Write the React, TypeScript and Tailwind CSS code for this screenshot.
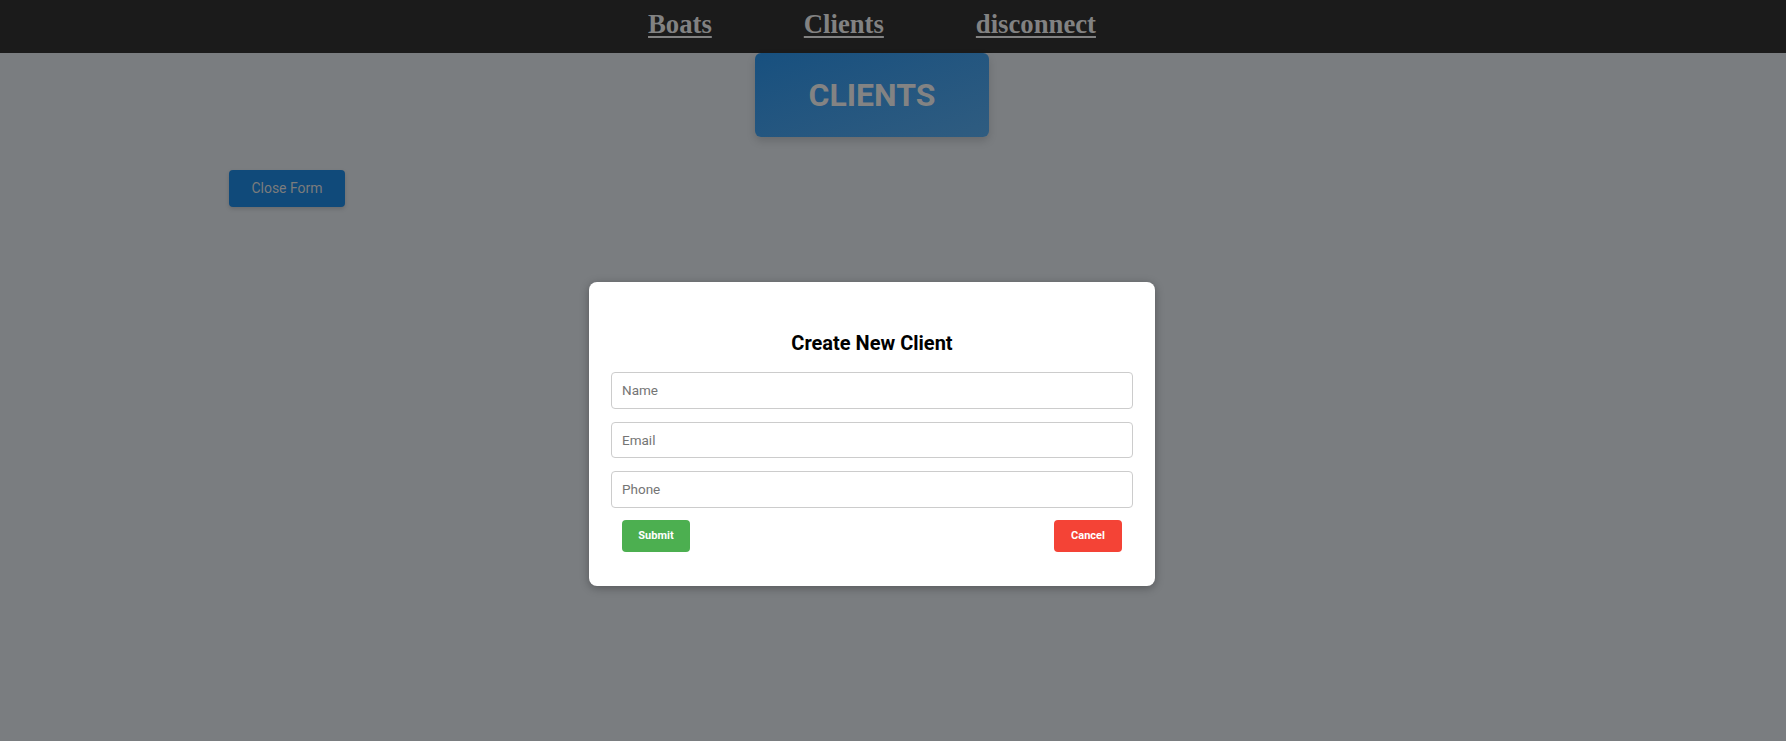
import { useState } from "react";

export default function App() {
  const [form, setForm] = useState({ name: "", email: "", phone: "" });
  const [open, setOpen] = useState(true);

  return (
    <div className="relative min-h-screen bg-[#7a7d80] font-['Roboto','Liberation_Sans',sans-serif]">
      <nav className="h-[53px] bg-[#1b1b1b] pr-[42px] pt-[9px]">
        <ul className="flex justify-center gap-[92px] font-['Liberation_Serif',serif] text-[26.7px] font-bold leading-[30px] text-[#828282]">
          <li>
            <a href="#" className="underline decoration-2 underline-offset-[3px]">Boats</a>
          </li>
          <li>
            <a href="#" className="underline decoration-2 underline-offset-[3px]">Clients</a>
          </li>
          <li>
            <a href="#" className="underline decoration-2 underline-offset-[3px]">disconnect</a>
          </li>
        </ul>
      </nav>

      <main className="pr-[42px]">
        <div className="flex justify-center">
          <h1 className="flex h-[84px] w-[234px] items-center justify-center rounded-md bg-gradient-to-br from-[#17507f] to-[#2f5c80] text-[32px] font-bold text-[#838383] shadow-[0_4px_8px_rgba(0,0,0,0.15)]">
            CLIENTS
          </h1>
        </div>

        <div className="ml-[229px] mt-[33px]">
          <button
            onClick={() => setOpen(!open)}
            className="h-[37px] w-[116px] rounded-[4px] bg-[#104a7a] text-[14px] text-[#7c7c7c] shadow-[0_2px_4px_rgba(0,0,0,0.15)]"
          >
            Close Form
          </button>
        </div>
      </main>

      {open && (
        <div className="absolute inset-0 flex items-start justify-center pr-[42px] pt-[282px]">
          <form
            onSubmit={(e) => e.preventDefault()}
            className="w-[566px] rounded-lg bg-white px-[22px] pb-[34px] pt-[49px] shadow-[0_2px_10px_rgba(0,0,0,0.3)]"
          >
            <h2 className="mb-[17px] text-center text-[20px] font-bold leading-[24px] text-black">
              Create New Client
            </h2>

            <div className="flex flex-col gap-[13px]">
              <input
                type="text"
                placeholder="Name"
                value={form.name}
                onChange={(e) => setForm({ ...form, name: e.target.value })}
                className="h-[36.5px] w-full rounded-[4px] border border-[#cccccc] px-[10px] text-[13.5px] placeholder:text-[#757575]"
              />
              <input
                type="email"
                placeholder="Email"
                value={form.email}
                onChange={(e) => setForm({ ...form, email: e.target.value })}
                className="h-[36.5px] w-full rounded-[4px] border border-[#cccccc] px-[10px] text-[13.5px] placeholder:text-[#757575]"
              />
              <input
                type="tel"
                placeholder="Phone"
                value={form.phone}
                onChange={(e) => setForm({ ...form, phone: e.target.value })}
                className="h-[36.5px] w-full rounded-[4px] border border-[#cccccc] px-[10px] text-[13.5px] placeholder:text-[#757575]"
              />
            </div>

            <div className="mt-[12.5px] flex justify-between px-[11px]">
              <button
                type="submit"
                className="h-[32px] w-[68px] rounded-[4px] bg-[#4caf50] text-[11px] font-bold text-white"
              >
                Submit
              </button>
              <button
                type="button"
                onClick={() => setOpen(false)}
                className="h-[32px] w-[68px] rounded-[4px] bg-[#f44336] text-[11px] font-bold text-white"
              >
                Cancel
              </button>
            </div>
          </form>
        </div>
      )}
    </div>
  );
}
